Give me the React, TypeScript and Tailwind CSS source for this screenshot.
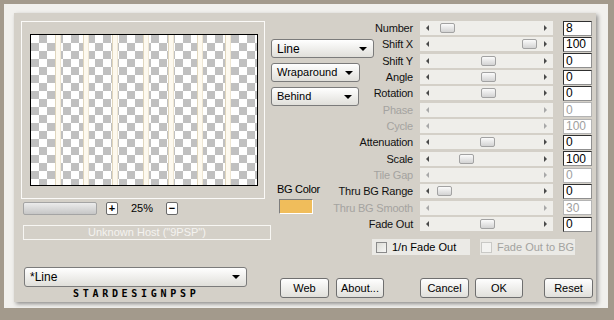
import React from 'react'

type Row = { label: string; value: string; thumb?: number; disabled?: boolean }

const rows: Row[] = [
  { label: 'Number', value: '8', thumb: 20 },
  { label: 'Shift X', value: '100', thumb: 102 },
  { label: 'Shift Y', value: '0', thumb: 61 },
  { label: 'Angle', value: '0', thumb: 61 },
  { label: 'Rotation', value: '0', thumb: 61 },
  { label: 'Phase', value: '0', disabled: true },
  { label: 'Cycle', value: '100', disabled: true },
  { label: 'Attenuation', value: '0', thumb: 60 },
  { label: 'Scale', value: '100', thumb: 39 },
  { label: 'Tile Gap', value: '0', disabled: true },
  { label: 'Thru BG Range', value: '0', thumb: 17 },
  { label: 'Thru BG Smooth', value: '30', disabled: true },
  { label: 'Fade Out', value: '0', thumb: 60 },
]

// x offsets of the line stripes inside the preview
const stripes = [24, 52, 81, 112, 137, 166, 194]

function Arrow() {
  return <span className="h-0 w-0 border-x-[4px] border-t-[4px] border-x-transparent border-t-black" />
}

function Combo({ text, className }: { text: string; className: string }) {
  return (
    <div
      className={`flex items-center justify-between rounded-[3px] border border-[#7b7b7b] bg-linear-to-b from-white to-[#e0dfda] pl-[5px] pr-[6px] ${className}`}
    >
      <span>{text}</span>
      <Arrow />
    </div>
  )
}

function Slider({ thumb, disabled }: { thumb?: number; disabled?: boolean }) {
  return (
    <div className="relative ml-[7px] flex h-[14px] w-[133px] items-center justify-between bg-[#efeeea] px-[6px]">
      <span
        className={`h-0 w-0 border-y-[3px] border-r-[3px] border-y-transparent ${disabled ? 'border-r-[#a8a8a8]' : 'border-r-[#4a4a4a]'}`}
      />
      <span
        className={`h-0 w-0 border-y-[3px] border-l-[3px] border-y-transparent ${disabled ? 'border-l-[#a8a8a8]' : 'border-l-[#4a4a4a]'}`}
      />
      {thumb !== undefined && (
        <div
          className="absolute top-[2px] h-[10px] w-[15px] rounded-[2px] border border-[#a2a2a2] bg-linear-to-b from-[#fbfbfb] to-[#d3d3d3]"
          style={{ left: thumb }}
        />
      )}
    </div>
  )
}

function Button({ text, className }: { text: string; className: string }) {
  return (
    <div
      className={`flex h-[20px] items-center justify-center rounded-[3px] border border-[#6f6f6f] bg-linear-to-b from-[#fefefe] to-[#e1e0db] text-[11px] ${className}`}
    >
      {text}
    </div>
  )
}

export default function App() {
  return (
    <div className="h-[320px] w-[614px] bg-[#a39a8c] pb-[12px] pl-[4px] pr-[6px] pt-[4px] font-['Liberation_Sans',Arial,sans-serif] text-[11px] text-black">
      <div className="h-full w-full bg-[#f1f0ed] pb-[6px] pl-[10px] pr-[12px] pt-[9px]">
        <div className="flex h-[289px] w-[582px] bg-[#d4d0c8] shadow-[2px_2px_4px_rgba(0,0,0,0.4)]">
          {/* left: preview */}
          <div className="flex w-[257px] flex-col pl-[7px] pt-[8px]">
            <div className="h-[178px] w-[244px] border border-[#fbfaf8] pl-[8px] pt-[12px]">
              <div className="h-[152px] w-[228px] border border-black">
                <svg width="226" height="150" className="block">
                  <defs>
                    <pattern id="chk" width="16" height="16" patternUnits="userSpaceOnUse">
                      <rect width="16" height="16" fill="#ffffff" />
                      <rect x="8" width="8" height="8" fill="#c0c0c0" />
                      <rect y="8" width="8" height="8" fill="#c0c0c0" />
                    </pattern>
                  </defs>
                  <rect width="226" height="150" fill="url(#chk)" />
                  {stripes.map((x) => (
                    <g key={x}>
                      <rect x={x} width="5" height="150" fill="#fdf9ef" />
                      <rect x={x} width="1" height="150" fill="#e0d6bd" />
                      <rect x={x + 5} width="1" height="150" fill="#eee6d3" />
                    </g>
                  ))}
                </svg>
              </div>
            </div>

            <div className="mt-[3px] flex h-[13px] items-center">
              <div className="ml-[2px] h-[13px] w-[74px] rounded-[2px] border border-[#a4a4a4] bg-linear-to-b from-[#ececec] to-[#c6c6c6]" />
              <div className="ml-[9px] flex h-[13px] w-[12px] items-center justify-center rounded-[2px] border border-[#6a6a6a] bg-white text-[11px] font-bold leading-none">
                +
              </div>
              <div className="w-[48px] text-center text-[11px]">25%</div>
              <div className="flex h-[13px] w-[12px] items-center justify-center rounded-[2px] border border-[#6a6a6a] bg-white text-[11px] font-bold leading-none">
                −
              </div>
            </div>

            <div className="ml-[2px] mt-[10px] flex h-[15px] w-[248px] items-center justify-center border border-[#f7f6f3] text-[11px] text-[#f4f3f0]">
              Unknown Host ("9PSP")
            </div>

            <Combo text="*Line" className="ml-[3px] mt-[27px] h-[20px] w-[223px] text-[12px]" />

            <div className="ml-[52px] mt-[3px] font-['DejaVu_Sans_Mono',monospace] text-[10px] font-bold leading-[8px] tracking-[3.7px]">
              STARDESIGNPSP
            </div>
          </div>

          {/* right: controls */}
          <div className="flex w-[325px] flex-col pt-[7px]">
            <div className="grid">
              <div className="col-start-1 row-start-1 flex flex-col">
                {rows.map((r) => (
                  <div key={r.label} className="flex h-[16.33px] items-center">
                    <div
                      className={`flex w-[142px] justify-end whitespace-nowrap tracking-[-0.2px] ${r.disabled ? 'text-[#a4a3a0]' : 'text-[#111]'}`}
                    >
                      {r.label}
                    </div>
                    <Slider thumb={r.thumb} disabled={r.disabled} />
                    <div
                      className={`ml-[10px] flex h-[15px] w-[29px] items-center border bg-white pl-[2px] text-[12px] leading-none ${
                        r.disabled
                          ? 'border-[#b4b4b4] text-[#a0a0a0]'
                          : 'border-b-[#8f8f8f] border-l-[#303030] border-r-[#8f8f8f] border-t-[#303030] text-black'
                      }`}
                    >
                      {r.value}
                    </div>
                  </div>
                ))}
              </div>

              <div className="col-start-1 row-start-1 flex flex-col items-start pt-[19px]">
                <Combo text="Line" className="h-[19px] w-[103px] text-[12px]" />
                <Combo text="Wraparound" className="mt-[5px] h-[19px] w-[89px] text-[11px]" />
                <Combo text="Behind" className="mt-[5px] h-[19px] w-[88px] text-[11px]" />
                <div className="ml-[6px] mt-[77px] text-[11px] leading-[12px] tracking-[-0.3px]">BG Color</div>
                <div className="ml-[8px] mt-[4px] h-[15px] w-[34px] border border-b-white border-l-[#7d7d7d] border-r-white border-t-[#7d7d7d] bg-[#f0bd5b]" />
              </div>
            </div>

            <div className="mt-[7px] flex h-[16px] whitespace-nowrap">
              <div className="ml-[101px] flex h-[16px] w-[98px] items-center bg-[#ebeae6] pl-[4px]">
                <div className="h-[11px] w-[11px] border border-[#8a8a8a] bg-linear-to-br from-[#dcdcd6] to-[#f7f7f5]" />
                <span className="ml-[5px]">1/n Fade Out</span>
              </div>
              <div className="ml-[10px] flex h-[16px] w-[95px] items-center bg-[#ebeae6] pl-[1px]">
                <div className="h-[11px] w-[11px] border border-[#c9c9c6] bg-[#f3f3f1]" />
                <span className="ml-[5px] text-[#a3a3a0]">Fade Out to BG</span>
              </div>
            </div>

            <div className="mt-[23px] flex">
              <Button text="Web" className="ml-[9px] w-[49px]" />
              <Button text="About..." className="ml-[7px] w-[48px]" />
              <Button text="Cancel" className="ml-[36px] w-[49px]" />
              <Button text="OK" className="ml-[6px] w-[48px]" />
              <Button text="Reset" className="ml-[21px] w-[49px]" />
            </div>
          </div>
        </div>
      </div>
    </div>
  )
}
